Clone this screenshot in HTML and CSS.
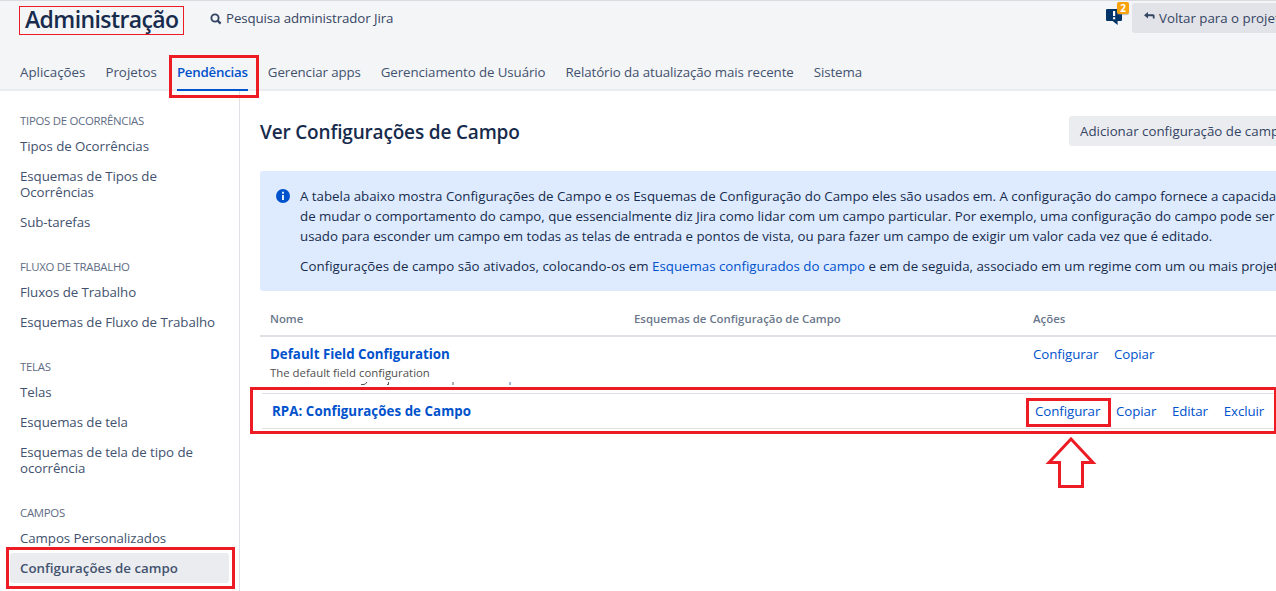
FILE: index.html
```html
<!DOCTYPE html>
<html lang="pt-BR">
<head>
<meta charset="utf-8">
<title>Administração</title>
<link rel="stylesheet" href="styles.css">
</head>
<body>
<header class="header">
  <div class="topbar">
    <h1 class="title">Administração</h1>
    <a class="search">
      <svg class="search-icon" viewBox="0 0 12 12"><circle cx="5" cy="5" r="3.6" fill="none" stroke="#344563" stroke-width="1.9"/><path d="M7.6 7.6L10.6 10.6" stroke="#344563" stroke-width="2.3"/></svg>
      <span>Pesquisa administrador Jira</span>
    </a>
    <div class="top-actions">
      <div class="feedback">
        <svg class="feedback-icon" viewBox="0 0 16 16"><path d="M1.2 0H14.8Q16 0 16 1.2V10.8Q16 12 14.8 12H11.6V16L6.6 12H1.2Q0 12 0 10.8V1.2Q0 0 1.2 0Z" fill="#003366"/><path d="M7 2H9.2V7H7ZM7 8.2H9.2V10.2H7Z" fill="#fff"/></svg>
        <span class="badge">2</span>
      </div>
      <a class="button back">
        <svg class="back-icon" viewBox="0 0 11 8"><path d="M0 3.2L4 0V2.2H9Q10.6 2.2 10.6 3.8V6.4H8.8V4.2H4V6.4Z" fill="#344563"/></svg>
        <span>Voltar para o projeto</span>
      </a>
    </div>
  </div>
  <nav class="tabs">
    <a class="tab">Aplicações</a>
    <a class="tab">Projetos</a>
    <a class="tab active">Pendências</a>
    <a class="tab">Gerenciar apps</a>
    <a class="tab">Gerenciamento de Usuário</a>
    <a class="tab">Relatório da atualização mais recente</a>
    <a class="tab">Sistema</a>
  </nav>
</header>
<div class="page">
  <aside class="sidebar">
    <section class="group">
      <h2 class="group-title">TIPOS DE OCORRÊNCIAS</h2>
      <a class="item">Tipos de Ocorrências</a>
      <a class="item">Esquemas de Tipos de<br>Ocorrências</a>
      <a class="item">Sub-tarefas</a>
    </section>
    <section class="group">
      <h2 class="group-title">FLUXO DE TRABALHO</h2>
      <a class="item">Fluxos de Trabalho</a>
      <a class="item">Esquemas de Fluxo de Trabalho</a>
    </section>
    <section class="group">
      <h2 class="group-title">TELAS</h2>
      <a class="item">Telas</a>
      <a class="item">Esquemas de tela</a>
      <a class="item">Esquemas de tela de tipo de<br>ocorrência</a>
    </section>
    <section class="group">
      <h2 class="group-title">CAMPOS</h2>
      <a class="item">Campos Personalizados</a>
      <a class="item selected">Configurações de campo</a>
    </section>
  </aside>
  <main class="main">
    <div class="main-head">
      <h2 class="main-title">Ver Configurações de Campo</h2>
      <a class="button add">Adicionar configuração de campo</a>
    </div>
    <div class="info">
      <svg class="info-icon" viewBox="0 0 14 14"><circle cx="7" cy="7" r="7" fill="#0052cc"/><path d="M6 2.8H8V4.8H6ZM6 6H8V11H6Z" fill="#deebff"/></svg>
      <div>
        <p>A tabela abaixo mostra Configurações de Campo e os Esquemas de Configuração do Campo eles são usados em. A configuração do campo fornece a capacidade<br>de mudar o comportamento do campo, que essencialmente diz Jira como lidar com um campo particular. Por exemplo, uma configuração do campo pode ser<br>usado para esconder um campo em todas as telas de entrada e pontos de vista, ou para fazer um campo de exigir um valor cada vez que é editado.</p>
        <p><span class="lead">Configurações de campo são ativados, colocando-os em</span> <a class="link">Esquemas configurados do campo</a> e em de seguida, associado em um regime com um ou mais projetos.</p>
      </div>
    </div>
    <div class="table">
      <div class="row head"><span>Nome</span><span>Esquemas de Configuração de Campo</span><span>Ações</span></div>
      <div class="row first">
        <div>
          <a class="name">Default Field Configuration</a>
          <div class="desc">The default field configuration</div>
          <svg class="cut" viewBox="0 0 160 3"><path d="M0 2.5H3Q5 2 6 0M26 2.500H27.500V0" fill="none" stroke="#555" stroke-width="1"/><path d="M92 0V3" stroke="#777" stroke-width="1.2"/><path d="M149 0V3" stroke="#5a86c0" stroke-width="1.2"/></svg>
        </div>
        <span></span>
        <div class="actions"><a>Configurar</a><a>Copiar</a></div>
      </div>
      <div class="row second">
        <a class="name">RPA: Configurações de Campo</a>
        <span></span>
        <div class="actions"><a>Configurar</a><a>Copiar</a><a>Editar</a><a>Excluir</a></div>
      </div>
    </div>
  </main>
</div>
<div class="mark mark-title"></div>
<div class="mark mark-tab"></div>
<div class="mark mark-item"></div>
<div class="mark mark-row"></div>
<div class="mark mark-link"></div>
<svg class="arrow" viewBox="0 0 52 52"><path d="M26 2L48 25.500H37.500V49.500H14.500V25.500H4Z" fill="#fff" stroke="#ed1c24" stroke-width="3"/></svg>
</body>
</html>
```
FILE: styles.css
```css
* { box-sizing: border-box; }
body { margin: 0; width: 1276px; height: 591px; overflow: hidden; background: #fff; font: 13.3px/20px "Open Sans", "Noto Sans", sans-serif; color: #172b4d; white-space: nowrap; position: relative; }
h1, h2, p { margin: 0; }

.header { height: 91px; background: #f4f5f7; border-top: 1px solid #d9dbe0; box-shadow: inset 0 -2px #ebecf0; display: flex; flex-direction: column; justify-content: space-between; overflow: hidden; }
.topbar { display: flex; align-items: flex-start; padding-left: 25px; }
.title { width: 185px; font-size: 23px; font-weight: 600; line-height: 37px; letter-spacing: -.6px; }
.search { display: flex; align-items: center; gap: 4px; height: 34px; color: #344563; letter-spacing: -.1px; }
.search-icon { width: 12px; height: 12px; margin-top: 2px; }
.top-actions { display: flex; align-items: flex-start; margin-left: auto; padding-top: 2px; width: 170px; flex: none; }
.feedback { position: relative; width: 26px; height: 30px; padding-top: 6px; flex: none; }
.feedback-icon { width: 16px; height: 16px; display: block; }
.badge { position: absolute; left: 11px; top: -1px; width: 12px; height: 12px; border-radius: 2px; background: #f9a20b; color: #fff; font: 700 10px/12px "Open Sans", sans-serif; text-align: center; box-shadow: 0 1px 1px #8888; }
.button { flex: none; height: 30px; border-radius: 3px; background: #ebecf0; color: #344563; line-height: 30px; overflow: hidden; }
.back { display: flex; width: 144px; padding-left: 12px; gap: 4px; background: #e2e3e8; border-radius: 3px 0 0 3px; }
.back-icon { width: 11px; height: 8px; margin-top: 9px; flex: none; }
.tabs { display: flex; gap: 20px; padding-left: 20px; color: #42526e; letter-spacing: -.09px; }
.tab { height: 29px; }
.tab:nth-child(-n+2) { letter-spacing: .02px; }
.tabs .active { color: #0052cc; font-weight: 600; letter-spacing: -.22px; border-bottom: 2px solid #0052cc; }

.page { display: flex; height: 500px; }
.sidebar { width: 240px; flex: none; border-right: 1px solid #dfe1e6; padding: 20px 10px 0; color: #42526e; }
.group { display: flex; flex-direction: column; margin-bottom: 20px; }
.group-title { font-size: 11.4px; font-weight: 500; line-height: 20px; height: 20px; padding-left: 10px; color: #5e6c84; letter-spacing: -.28px; }
.item { padding: 7px 10px; line-height: 16px; border-radius: 3px; letter-spacing: -.07px; }
.selected { background: #ebecf0; font-weight: 600; letter-spacing: 0; }
.main { flex: 1; min-width: 0; overflow: hidden; padding: 20px 0 0 20px; }
.main-head { display: flex; padding-top: 5px; height: 60px; }
.main-title { width: 809px; flex: none; font-size: 19px; font-weight: 600; line-height: 32px; letter-spacing: -.17px; }
.add { width: 207px; padding-left: 11px; border-radius: 3px 0 0 3px; }
.info { height: 120px; display: flex; gap: 10px; padding: 15px 0 15px 16px; background: #deebff; border-radius: 3px 0 0 3px; overflow: hidden; }
.info-icon { width: 14px; height: 14px; margin-top: 3px; flex: none; }
.info p { letter-spacing: -.01px; }
.info p + p { margin-top: 10px; }
.info .lead { letter-spacing: .04px; }
.link { color: #0052cc; }
.table { color: #0052cc; }
.row { display: grid; grid-template-columns: 364px 399px 240px; padding-left: 10px; }
.head { height: 46px; padding-top: 18px; font-size: 11.4px; font-weight: 600; color: #6b778c; border-bottom: 2px solid #dfe1e6; }
.first { height: 56px; padding-top: 7px; }
.name { display: block; font-weight: 700; }
.desc { font-size: 11.4px; line-height: 16px; color: #505050; margin-top: 1px; }
.cut { display: block; width: 160px; height: 3px; margin: 1px 0 0 91px; }
.actions { display: flex; gap: 15.7px; letter-spacing: -.07px; }
.second { margin-left: 2px; width: 1012px; height: 36px; padding-top: 7px; border-top: 1px solid #dfe1e6; border-bottom: 1px solid #dfe1e6; }
.second .name { letter-spacing: .06px; }

/* Highlight boxes drawn over the interface */
.mark { position: absolute; border: 3px solid #ed1c24; }
.mark-title { left: 19px; top: 6px; width: 165px; height: 29px; border-width: 1px; }
.mark-tab { left: 169px; top: 55px; width: 90px; height: 43px; }
.mark-item { left: 6px; top: 547px; width: 229px; height: 42px; }
.mark-row { left: 250px; top: 387px; width: 1026px; height: 47px; border-right-width: 2px; }
.mark-link { left: 1026px; top: 398px; width: 85px; height: 29px; }
.arrow { position: absolute; left: 1045px; top: 437px; width: 52px; height: 52px; }
```
